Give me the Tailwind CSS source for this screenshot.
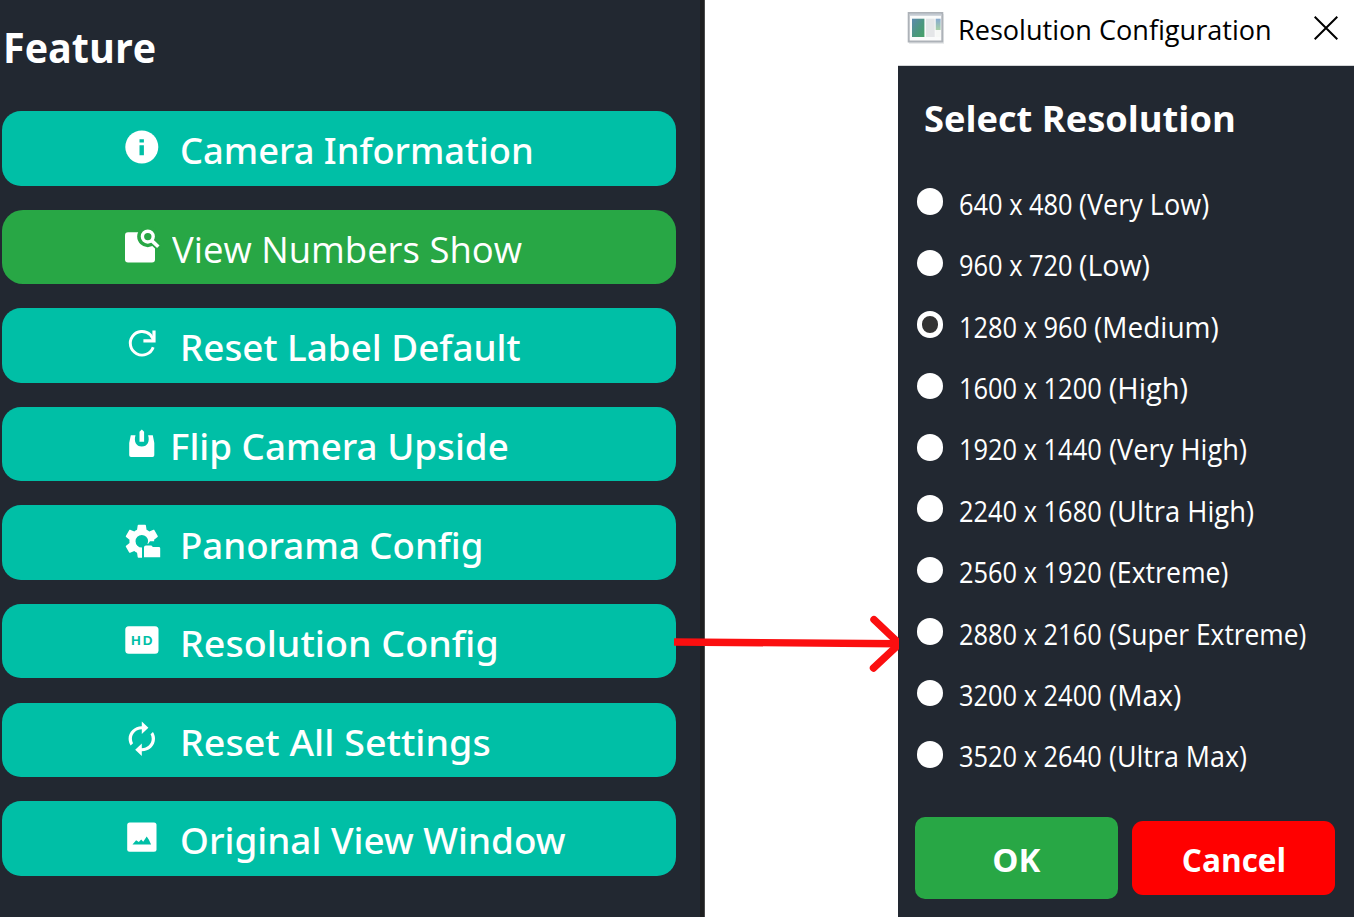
<!DOCTYPE html>
<html lang="en">
<head>
<meta charset="utf-8">
<title>Resolution Configuration</title>
<script src="https://cdn.jsdelivr.net/npm/@tailwindcss/browser@4"></script>
</head>
<body class="bg-white font-['Open_Sans','Noto_Sans',sans-serif] text-white">
<main class="relative flex h-[917px] w-[1354px] justify-between overflow-hidden whitespace-nowrap">

  <!-- Feature panel -->
  <aside class="flex w-[705px] flex-col border-r border-[#4a4a4a] bg-[#222831] shadow-[inset_-4px_0_0_#1e1f20]">
    <h1 class="h-[111px] pt-[17px] pl-[3px] text-[42px] leading-[60px] font-bold"><span class="inline-block origin-left scale-x-[0.94]">Feature</span></h1>
    <nav class="flex w-[676px] flex-col gap-[24.1px] pl-[2px] font-['Noto_Sans',sans-serif] text-[37px] leading-[50px] font-medium">
      <button class="flex h-[74.5px] items-center rounded-[19px] bg-[#00bfa6] pl-[120px]">
        <svg class="mb-[2.5px] size-10 shrink-0" viewBox="0 0 40 40"><circle cx="19.8" cy="20" r="16.5" fill="#fff"/><path fill="#00bfa6" d="M17.5 12.2h4.4v3.2h-4.4zM17.5 18.2h4.4v10h-4.4z"/></svg>
        <span class="ml-[18px] inline-block origin-left scale-x-[0.981] pt-[4px]">Camera Information</span>
      </button>
      <button class="flex h-[74.5px] items-center rounded-[21px] bg-[#28a745] pl-[120px]">
        <svg class="mb-[2.5px] size-10 shrink-0" viewBox="0 0 40 40" fill="none"><rect x="3" y="6.3" width="30" height="30.3" rx="3" fill="#fff"/><circle cx="25.8" cy="10.6" r="10.6" fill="#28a745"/><path d="m29 14 9 8.5" stroke="#28a745" stroke-width="7"/><circle cx="25.8" cy="10.6" r="5.4" stroke="#fff" stroke-width="3.4"/><path d="m29.5 14.4 6.8 6.4" stroke="#fff" stroke-width="3.6"/></svg>
        <span class="ml-[10px] inline-block origin-left scale-x-[0.986] pt-[4px] font-['Open_Sans',sans-serif] font-normal">View Numbers Show</span>
      </button>
      <button class="flex h-[74.5px] items-center rounded-[19px] bg-[#00bfa6] pl-[120px]">
        <svg class="mb-[2.5px] size-10 shrink-0" viewBox="0 0 40 40" fill="none" stroke="#fff" stroke-width="2.9"><path d="M31.2 23.2A11.8 11.8 0 1 1 28.3 10.8l3.6 5.4"/><path d="M32 6.6v10.3H21.4" stroke-width="3.2"/></svg>
        <span class="ml-[18px] inline-block origin-left scale-x-[0.995] pt-[4px]">Reset Label Default</span>
      </button>
      <button class="flex h-[74.5px] items-center rounded-[19px] bg-[#00bfa6] pl-[120px]">
        <svg class="mb-[2.5px] size-10 shrink-0" viewBox="0 0 40 40" fill="#fff"><path d="M8.8 12.2h4.7c-1.9 6 .6 11.3 6.3 11.3s8.2-5.3 6.3-11.3h4.7L32.3 20v12.2q0 1.8-1.8 1.8H9q-1.8 0-1.8-1.8V20z"/><path d="m19.8 6.5 2.3 2.3v10h-4.6v-10z"/></svg>
        <span class="ml-[8px] inline-block origin-left scale-x-[0.993] pt-[4px]">Flip Camera Upside</span>
      </button>
      <button class="flex h-[74.5px] items-center rounded-[19px] bg-[#00bfa6] pl-[120px]">
        <svg class="mb-[2.5px] size-10 shrink-0" viewBox="0 0 40 40"><g transform="translate(0 .5) scale(1.65)"><path fill="#fff" fill-rule="evenodd" d="M12 15.8a3.8 3.8 0 1 1 0-7.6 3.8 3.8 0 0 1 0 7.6m7.43-2.83c.04-.32.07-.64.07-.97s-.03-.66-.07-1l2.11-1.63c.19-.15.24-.42.12-.64l-2-3.46c-.12-.22-.39-.31-.61-.22l-2.49 1c-.52-.39-1.06-.73-1.69-.98l-.37-2.65A.506.506 0 0 0 14 2h-4c-.25 0-.46.18-.5.42l-.37 2.65c-.63.25-1.17.59-1.69.98l-2.49-1c-.22-.09-.49 0-.61.22l-2 3.46c-.13.22-.07.49.12.64L4.57 11c-.04.34-.07.67-.07 1s.03.65.07.97l-2.11 1.66c-.19.15-.25.42-.12.64l2 3.46c.12.22.39.3.61.22l2.49-1.01c.52.4 1.06.74 1.69.99l.37 2.65c.04.24.25.42.5.42h4c.25 0 .46-.18.5-.42l.37-2.65c.63-.26 1.17-.59 1.69-.99l2.49 1.01c.22.08.49 0 .61-.22l2-3.46c.12-.22.07-.49-.12-.64z"/></g><path fill="#00bfa6" d="M20 23h6l2-2.8h12V39H20z"/><path fill="#fff" d="M24 24.4h5.4l1.5 1.6h6q1.3 0 1.3 1.3v9H22v-10q0-1.9 2-1.9"/></svg>
        <span class="ml-[18px] inline-block origin-left scale-x-[0.989] pt-[4px]">Panorama Config</span>
      </button>
      <button class="flex h-[74.5px] items-center rounded-[19px] bg-[#00bfa6] pl-[120px]">
        <svg class="mb-[2.5px] size-10 shrink-0" viewBox="0 0 40 40"><rect x="3.3" y="6.3" width="33.2" height="27.4" rx="3.5" fill="#fff"/><text x="9" y="24.8" textLength="21.5" fill="#00bfa6" class="font-['Liberation_Sans',sans-serif] text-[13.5px] font-bold">HD</text></svg>
        <span class="ml-[18px] inline-block origin-left scale-x-[1.017] pt-[4px]">Resolution Config</span>
      </button>
      <button class="flex h-[74.5px] items-center rounded-[19px] bg-[#00bfa6] pl-[120px]">
        <svg class="mb-[2.5px] size-10 shrink-0" viewBox="0 0 40 40"><path transform="translate(0 .9) scale(1.65 1.57)" fill="#fff" d="M12 6v3l4-4-4-4v3c-4.42 0-8 3.58-8 8 0 1.57.46 3.03 1.24 4.26L6.7 14.8A5.87 5.87 0 0 1 6 12c0-3.31 2.69-6 6-6m6.76 1.74L17.3 9.2c.44.84.7 1.79.7 2.8 0 3.31-2.69 6-6 6v-3l-4 4 4 4v-3c4.42 0 8-3.58 8-8 0-1.57-.46-3.03-1.24-4.26"/></svg>
        <span class="ml-[18px] inline-block origin-left scale-x-[1.017] pt-[4px]">Reset All Settings</span>
      </button>
      <button class="flex h-[74.5px] items-center rounded-[19px] bg-[#00bfa6] pl-[120px]">
        <svg class="mb-[2.5px] size-10 shrink-0" viewBox="0 0 40 40"><rect x="5.2" y="5.6" width="29.3" height="29.2" rx="2.5" fill="#fff"/><path fill="#00bfa6" d="m10.5 27.6 3.6-4.3 2.7 1.6 2.4-2.3 2 2.2 3.5-5.4 2.2 3.4 2.2 4.8z"/></svg>
        <span class="ml-[18px] inline-block origin-left scale-x-[0.996] pt-[4px]">Original View Window</span>
      </button>
    </nav>
  </aside>

  <!-- Arrow from the Resolution Config button to the dialog -->
  <svg class="absolute top-[610px] left-[674px] h-[66px] w-[224.5px]" viewBox="0 0 224.5 66" fill="none" stroke="#fb0f10" stroke-width="7.4"><path d="m0 32 224 1.7"/><path stroke-linecap="round" stroke-linejoin="round" d="m200 9.6 25.5 24.1L199.5 58"/></svg>

  <!-- Resolution dialog -->
  <section class="flex w-[456px] flex-col">
    <header class="flex h-[66px] items-start border-b border-[#d4d6d8] bg-white text-black">
      <svg class="mt-[11px] ml-[9px] h-[34px] w-[38px] shrink-0" viewBox="0 0 38 34">
        <defs><linearGradient id="pane" x1="0" y1="0" x2="1" y2="1"><stop offset="0" stop-color="#5b88ad"/><stop offset=".55" stop-color="#4b977f"/><stop offset="1" stop-color="#45a266"/></linearGradient><linearGradient id="side" x1="0" y1="0" x2="0" y2="1"><stop offset="0" stop-color="#86a9d0"/><stop offset=".6" stop-color="#a6cfa8"/><stop offset=".62" stop-color="#f6f8f6"/></linearGradient></defs>
        <path fill="#e9ebec" d="M2 3h35v30H2z"/>
        <path fill="#fafbfb" stroke="#adb2b8" stroke-width="2" d="M1.7 2h33.6v28.5H1.7z"/>
        <path fill="#c3cad2" d="M2.7 2.5h31.6v2.2H2.7z"/>
        <path fill="url(#pane)" d="M5 7.7h12.4V26H5z"/>
        <path fill="#e4e6e8" d="M19 7.7h8.7V26H19z"/>
        <path fill="url(#side)" d="M28.7 7.7h4.9V26h-4.9z"/>
      </svg>
      <h2 class="mt-[9px] ml-[12.5px] w-[356px] text-[28px] leading-[40px]"><span class="inline-block origin-left scale-x-[0.967]">Resolution Configuration</span></h2>
      <svg class="mt-[16px] size-6 shrink-0" viewBox="0 0 24 24" stroke="#000" stroke-width="2"><path d="m.7.7 22.6 22.6M23.3.7.7 23.3"/></svg>
    </header>
    <div class="flex grow flex-col bg-[#222831]">
      <h3 class="h-[105px] pt-[28px] pl-[25.5px] text-[36px] leading-[50px] font-bold"><span class="inline-block origin-left scale-x-[1.008]">Select Resolution</span></h3>
      <ul class="flex flex-col pl-[18.7px] text-[29px] leading-[40px]">
        <li class="flex h-[61.4px] items-center"><i class="mr-[16px] size-[26.6px] shrink-0 rounded-full bg-white"></i><span class="w-[120px] pt-[4.4px]"><span class="inline-block origin-left scale-x-[0.876]">640 x 480</span></span><span class="origin-left scale-x-[0.932] pt-[4.4px]">(Very Low)</span></li>
        <li class="flex h-[61.4px] items-center"><i class="mr-[16px] size-[26.6px] shrink-0 rounded-full bg-white"></i><span class="w-[120px] pt-[4.4px]"><span class="inline-block origin-left scale-x-[0.876]">960 x 720</span></span><span class="origin-left scale-x-[0.983] pt-[4.4px]">(Low)</span></li>
        <li class="flex h-[61.4px] items-center"><i class="mr-[16px] size-[26.6px] shrink-0 rounded-full border-[5px] border-white bg-[#333]"></i><span class="w-[149.5px] pt-[4.4px]"><span class="inline-block origin-left scale-x-[0.876]">1280 x 960</span></span><span class="-ml-[14.8px] origin-left scale-x-[0.966] pt-[4.4px]">(Medium)</span></li>
        <li class="flex h-[61.4px] items-center"><i class="mr-[16px] size-[26.6px] shrink-0 rounded-full bg-white"></i><span class="w-[149.5px] pt-[4.4px]"><span class="inline-block origin-left scale-x-[0.876]">1600 x 1200</span></span><span class="origin-left scale-x-[1.0] pt-[4.4px]">(High)</span></li>
        <li class="flex h-[61.4px] items-center"><i class="mr-[16px] size-[26.6px] shrink-0 rounded-full bg-white"></i><span class="w-[149.5px] pt-[4.4px]"><span class="inline-block origin-left scale-x-[0.876]">1920 x 1440</span></span><span class="origin-left scale-x-[0.94] pt-[4.4px]">(Very High)</span></li>
        <li class="flex h-[61.4px] items-center"><i class="mr-[16px] size-[26.6px] shrink-0 rounded-full bg-white"></i><span class="w-[149.5px] pt-[4.4px]"><span class="inline-block origin-left scale-x-[0.876]">2240 x 1680</span></span><span class="origin-left scale-x-[0.944] pt-[4.4px]">(Ultra High)</span></li>
        <li class="flex h-[61.4px] items-center"><i class="mr-[16px] size-[26.6px] shrink-0 rounded-full bg-white"></i><span class="w-[149.5px] pt-[4.4px]"><span class="inline-block origin-left scale-x-[0.876]">2560 x 1920</span></span><span class="origin-left scale-x-[0.918] pt-[4.4px]">(Extreme)</span></li>
        <li class="flex h-[61.4px] items-center"><i class="mr-[16px] size-[26.6px] shrink-0 rounded-full bg-white"></i><span class="w-[149.5px] pt-[4.4px]"><span class="inline-block origin-left scale-x-[0.876]">2880 x 2160</span></span><span class="origin-left scale-x-[0.909] pt-[4.4px]">(Super Extreme)</span></li>
        <li class="flex h-[61.4px] items-center"><i class="mr-[16px] size-[26.6px] shrink-0 rounded-full bg-white"></i><span class="w-[149.5px] pt-[4.4px]"><span class="inline-block origin-left scale-x-[0.876]">3200 x 2400</span></span><span class="origin-left scale-x-[0.97] pt-[4.4px]">(Max)</span></li>
        <li class="flex h-[61.4px] items-center"><i class="mr-[16px] size-[26.6px] shrink-0 rounded-full bg-white"></i><span class="w-[149.5px] pt-[4.4px]"><span class="inline-block origin-left scale-x-[0.876]">3520 x 2640</span></span><span class="origin-left scale-x-[0.927] pt-[4.4px]">(Ultra Max)</span></li>
      </ul>
      <div class="mt-[31.8px] flex items-center gap-[14px] pl-[16.7px] text-[32px] leading-[44px] font-bold">
        <button class="h-[82.6px] w-[203.3px] rounded-[10px] bg-[#28a745] pt-[3px]"><span class="inline-block scale-x-[1.03]">OK</span></button>
        <button class="h-[73.5px] w-[203.3px] rounded-[11px] bg-[#ff0000] pt-[3px]"><span class="inline-block scale-x-[0.985]">Cancel</span></button>
      </div>
    </div>
  </section>
</main>
</body>
</html>
